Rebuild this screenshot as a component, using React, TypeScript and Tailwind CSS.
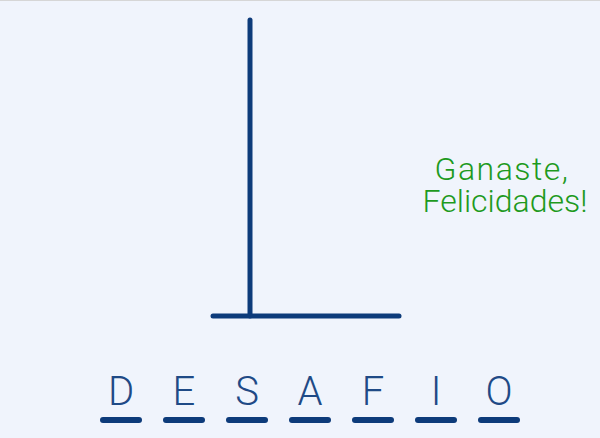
import React from "react";

const letters = ["D", "E", "S", "A", "F", "I", "O"];

export default function App() {
  return (
    <div
      className="w-[600px] h-[438px] overflow-hidden bg-[#f0f4fc] border-t border-[#d6d6d6] flex flex-col"
      style={{ fontFamily: "Roboto, 'Noto Sans', sans-serif" }}
    >
      <div className="flex pt-[11px] pl-[205px] h-[321px]">
        <svg width="200" height="310" viewBox="0 0 200 310" className="shrink-0">
          <line x1="45" y1="8" x2="45" y2="304" stroke="#0d3b7a" strokeWidth="5" strokeLinecap="round" />
          <line x1="8" y1="304" x2="194" y2="304" stroke="#0d3b7a" strokeWidth="5" strokeLinecap="round" />
        </svg>
        <div className="ml-[10px] mt-[141px] w-[180px] text-center font-light text-[#1e9a1e] text-[32px] leading-[32px]">
          <div className="tracking-[1.5px] pr-[6px]">Ganaste,</div>
          <div>Felicidades!</div>
        </div>
      </div>
      <div className="flex gap-[21px] pl-[100px] mt-[50px]">
        {letters.map((l, i) => (
          <div key={i} className="w-[42px] flex flex-col items-center">
            <span className="text-[40px] leading-[40px] font-light text-[#1f4a86]">{l}</span>
            <div className="mt-[5px] w-[42px] h-[6px] rounded-full bg-[#0d3b7a]" />
          </div>
        ))}
      </div>
    </div>
  );
}
